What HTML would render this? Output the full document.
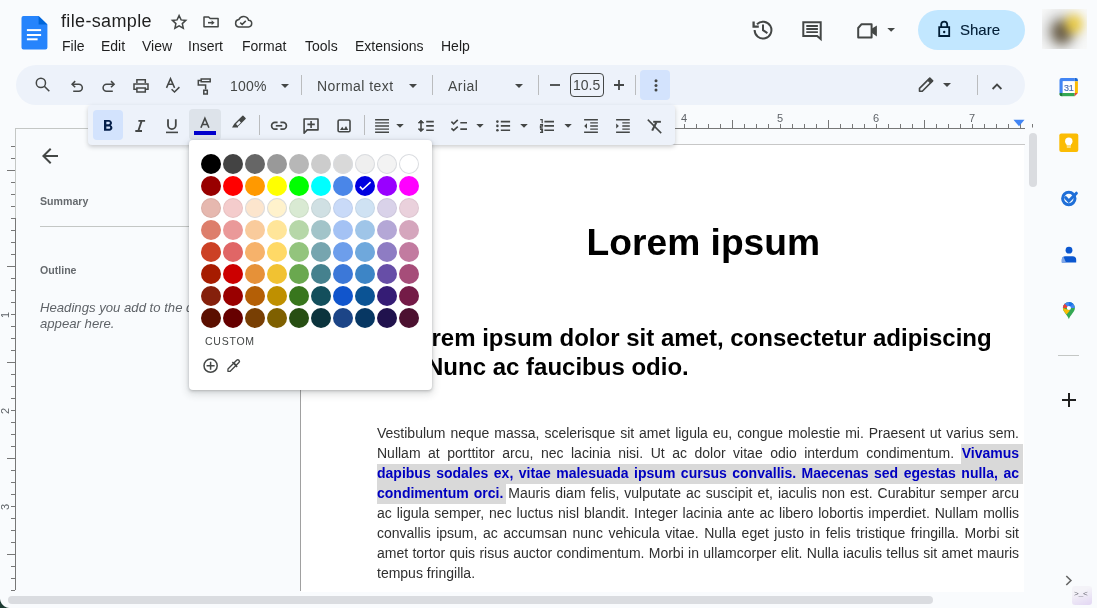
<!DOCTYPE html>
<html><head><meta charset="utf-8">
<style>
*{box-sizing:border-box;margin:0;padding:0}
html,body{width:1097px;height:608px;overflow:hidden;background:#f9fbfd;font-family:"Liberation Sans",sans-serif;color:#1f1f1f}
.a{position:absolute}
.ico{position:absolute;fill:none;stroke:#444746;stroke-width:2}
.menu{position:absolute;top:38.3px;font-size:14px;color:#1f1f1f;line-height:16px}
.tb{position:absolute;left:16px;top:65px;width:1009px;height:40px;border-radius:20px;background:#edf2fa}
.div{position:absolute;width:1px;height:20px;background:#babcbe}
.arr{position:absolute;width:0;height:0;border-left:4px solid transparent;border-right:4px solid transparent;border-top:4px solid #444746}
.tbt{position:absolute;font-size:14px;color:#444746;line-height:16px;letter-spacing:.45px}
.rn{position:absolute;font-size:11px;line-height:12px;color:#5f6368;width:8px;text-align:center}
.body{font-size:14px;line-height:20px;color:#303030}
.ln{text-align:justify;text-align-last:justify;white-space:nowrap;height:20px}
.ln b{color:#0000c0}
.last{text-align-last:left}
.sw{position:absolute;width:20px;height:20px;border-radius:50%}
</style></head><body><div id="root" style="position:absolute;left:0;top:0;width:1097px;height:608px;will-change:transform">

<!-- header -->
<svg class="a" style="left:21px;top:15px" width="27" height="36" viewBox="0 0 27 36">
  <path d="M2.5 1H17.6L26.4 9.6V32.6A2 2 0 0 1 24.4 34.6H2.5A2 2 0 0 1 0.5 32.6V3A2 2 0 0 1 2.5 1Z" fill="#2684fc"/>
  <path d="M17.6 1L26.4 9.6H17.6Z" fill="#0066da"/>
  <rect x="5.9" y="14.1" width="14.2" height="2" fill="#fff"/><rect x="5.9" y="19" width="14.2" height="2" fill="#fff"/><rect x="5.9" y="23.3" width="10.7" height="2" fill="#fff"/>
</svg>
<div class="a" style="left:61px;top:10px;font-size:18px;line-height:22px;color:#1f1f1f;letter-spacing:.35px">file-sample</div>

<div class="menu" style="left:62px">File</div>
<div class="menu" style="left:101px">Edit</div>
<div class="menu" style="left:142px">View</div>
<div class="menu" style="left:188px">Insert</div>
<div class="menu" style="left:242px">Format</div>
<div class="menu" style="left:305px">Tools</div>
<div class="menu" style="left:355px">Extensions</div>
<div class="menu" style="left:441px">Help</div>

<!-- share -->
<div class="a" style="left:918px;top:10px;width:107px;height:40px;border-radius:20px;background:#c2e7ff"></div>
<div class="a" style="left:960px;top:22px;font-size:15px;line-height:16px;color:#001d35;-webkit-text-stroke:.12px #001d35">Share</div>
<div class="a" style="left:1042px;top:9px;width:45px;height:40px;overflow:hidden;background:#f8f9f9">
<div class="a" style="left:-8px;top:-8px;width:61px;height:56px;filter:blur(5px);background:radial-gradient(ellipse 12px 13px at 40px 23px,#f0d548 0%,#e6c640 45%,rgba(240,220,120,0) 100%),radial-gradient(ellipse 14px 16px at 28px 31px,#5d5244 0%,#6e624c 45%,rgba(150,145,140,0) 100%),radial-gradient(ellipse 24px 26px at 27px 30px,rgba(150,150,150,.75) 0%,rgba(246,247,247,0) 100%)"></div>
</div>

<!-- toolbar -->
<div class="tb"></div>
<div class="tbt" style="left:230px;top:78px;letter-spacing:.2px">100%</div>
<div class="arr" style="left:281px;top:84px"></div>
<div class="div" style="left:301px;top:75px"></div>
<div class="tbt" style="left:317px;top:78px">Normal text</div>
<div class="arr" style="left:409px;top:84px"></div>
<div class="div" style="left:432px;top:75px"></div>
<div class="tbt" style="left:448px;top:78px">Arial</div>
<div class="arr" style="left:515px;top:84px"></div>
<div class="div" style="left:538px;top:75px"></div>
<div class="a" style="left:570px;top:73px;width:34px;height:24px;border:1px solid #444746;border-radius:4px"></div>
<div class="tbt" style="left:573px;top:77px;letter-spacing:0">10.5</div>
<div class="div" style="left:635px;top:75px"></div>
<div class="a" style="left:640px;top:70px;width:30px;height:30px;border-radius:4px;background:#d3e3fd"></div>
<div class="arr" style="left:943px;top:83px"></div>
<div class="div" style="left:977px;top:75px"></div>



<svg class="a" style="left:0;top:0" width="1097" height="608" viewBox="0 0 1097 608" fill="none" stroke="#444746" stroke-width="1.6">
<!-- star -->
<path d="M179.1 15.6L181.1 19.9L185.8 20.4L182.3 23.6L183.3 28.2L179.1 25.9L174.9 28.2L175.9 23.6L172.4 20.4L177.1 19.9Z" stroke-width="1.5" stroke-linejoin="miter"/>
<!-- folder move -->
<path d="M204 16.9H208.6L210.2 18.6H218.1V26.8H204Z" stroke-width="1.5" stroke-linejoin="round"/>
<path d="M208 22.7H212.5" stroke-width="1.6"/><path d="M211.6 20.3L214.6 22.7L211.6 25.1Z" fill="#444746" stroke="none"/>
<!-- cloud done -->
<path d="M238.6 26.9H248.2A3.3 3.3 0 0 0 248.6 20.3A5.2 5.2 0 0 0 238.8 19.6A3.7 3.7 0 0 0 238.6 26.9Z" stroke-width="1.5"/>
<path d="M240.2 22.6L242.2 24.4L245.8 20.9" stroke-width="1.5"/>
<!-- history -->
<path d="M754.6 30A8.4 8.4 0 1 0 757 24.2" stroke-width="2"/>
<path d="M753.6 21.4V26.6H758.8" stroke-width="2.3"/>
<path d="M763 24.6V30.2L767.4 33.2" stroke-width="2"/>
<!-- comment -->
<path d="M803.3 22.2H820.7V39L817.2 35.9H803.3Z" stroke-width="2" stroke-linejoin="miter"/>
<path d="M806.3 26H817.9M806.3 29H817.9M806.3 32.1H817.9" stroke-width="1.8"/>
<!-- video -->
<path d="M861.6 24.2H871.6V37.6H858.2V28Z" stroke-width="2" stroke-linejoin="round"/>
<path d="M872 28.6L876.9 25.4V36.4L872 33Z" fill="#444746" stroke="none"/>
<path d="M887.3 28H895L891.15 31.8Z" fill="#444746" stroke="none"/>
<!-- lock -->
<path d="M939.2 27.2H949.2V36H939.2Z" stroke="#001d35" stroke-width="1.8"/>
<path d="M941.2 27V24.6A3 3 0 0 1 947.2 24.6V27" stroke="#001d35" stroke-width="1.8"/>
<circle cx="944.2" cy="32" r="1.2" fill="#001d35" stroke="none"/>
<!-- search -->
<circle cx="40.9" cy="82.9" r="4.6" stroke-width="1.5"/>
<path d="M44.3 86.3L49.3 91.3" stroke-width="1.6"/>
<!-- undo -->
<path d="M73.2 91.2H78.8A3.5 3.5 0 0 0 78.8 84.2H72.2" stroke-width="1.55"/>
<path d="M75.2 81.1L72.1 84.2L75.2 87.3" stroke-width="1.55"/>
<!-- redo -->
<path d="M112.8 91.2H106.6A3.5 3.5 0 0 1 106.6 84.2H114" stroke-width="1.55"/>
<path d="M111 81.1L114.1 84.2L111 87.3" stroke-width="1.55"/>
<!-- print -->
<path d="M136.9 83V79.8H145.3V83" stroke-width="1.5"/>
<path d="M136.9 89.3H134V83.9H148V89.3H145.3" stroke-width="1.5"/>
<path d="M136.9 87.9H145.3V92H136.9Z" stroke-width="1.5"/>
<!-- spellcheck -->
<path d="M166.5 87.9L170.5 78.6L174.6 87.9M168 84.3H173" stroke-width="1.5"/>
<path d="M171.6 89.3L174.5 92L179.4 87.1" stroke-width="1.5"/>
<!-- paint format -->
<path d="M201.2 79H210.2V81.8H201.2Z" stroke-width="1.5"/>
<path d="M201 80.4H198.3V85H205.6V89.6" stroke-width="1.5"/>
<path d="M203.8 90.2H207.3V94H203.8Z" stroke-width="1.5"/>
<!-- minus plus -->
<path d="M550 85H560" stroke-width="1.8"/>
<path d="M614 85H624M619 80V90" stroke-width="1.8"/>
<!-- more -->
<circle cx="656" cy="80.8" r="1.5" fill="#444746" stroke="none"/><circle cx="656" cy="85.4" r="1.5" fill="#444746" stroke="none"/><circle cx="656" cy="90" r="1.5" fill="#444746" stroke="none"/>
<!-- pencil -->
<path d="M919.5 91.2V88.4L929.8 78.1L932.6 80.9L922.3 91.2Z" stroke-width="1.6" stroke-linejoin="round"/><path d="M927.6 80.3L929.8 78.1L932.6 80.9L930.4 83.1Z" fill="#444746" stroke="#444746" stroke-width="1"/>
<!-- caret up -->
<path d="M992.6 89L997 84.6L1001.4 89" stroke-width="1.8"/>
</svg>

<!-- rulers -->
<div class="a" style="left:15px;top:128px;width:1010px;height:1px;background:#c4c7c5"></div>
<div class="a" style="left:300px;top:128px;width:725px;height:1px;background:#777"></div>
<div class="a" style="left:15px;top:128px;width:1px;height:90px;background:#c4c7c5"></div>
<div class="a" style="left:15px;top:218px;width:1px;height:372px;background:#777"></div>
<div class="a" style="left:684px;top:124px;width:1px;height:4px;background:#777"></div>
<div class="a" style="left:696px;top:124px;width:1px;height:4px;background:#777"></div>
<div class="a" style="left:708px;top:124px;width:1px;height:4px;background:#777"></div>
<div class="a" style="left:720px;top:124px;width:1px;height:4px;background:#777"></div>
<div class="a" style="left:732px;top:120px;width:1px;height:8px;background:#777"></div>
<div class="a" style="left:744px;top:124px;width:1px;height:4px;background:#777"></div>
<div class="a" style="left:756px;top:124px;width:1px;height:4px;background:#777"></div>
<div class="a" style="left:768px;top:124px;width:1px;height:4px;background:#777"></div>
<div class="a" style="left:780px;top:124px;width:1px;height:4px;background:#777"></div>
<div class="a" style="left:792px;top:124px;width:1px;height:4px;background:#777"></div>
<div class="a" style="left:804px;top:124px;width:1px;height:4px;background:#777"></div>
<div class="a" style="left:816px;top:124px;width:1px;height:4px;background:#777"></div>
<div class="a" style="left:828px;top:120px;width:1px;height:8px;background:#777"></div>
<div class="a" style="left:840px;top:124px;width:1px;height:4px;background:#777"></div>
<div class="a" style="left:852px;top:124px;width:1px;height:4px;background:#777"></div>
<div class="a" style="left:864px;top:124px;width:1px;height:4px;background:#777"></div>
<div class="a" style="left:876px;top:124px;width:1px;height:4px;background:#777"></div>
<div class="a" style="left:888px;top:124px;width:1px;height:4px;background:#777"></div>
<div class="a" style="left:900px;top:124px;width:1px;height:4px;background:#777"></div>
<div class="a" style="left:912px;top:124px;width:1px;height:4px;background:#777"></div>
<div class="a" style="left:924px;top:120px;width:1px;height:8px;background:#777"></div>
<div class="a" style="left:936px;top:124px;width:1px;height:4px;background:#777"></div>
<div class="a" style="left:948px;top:124px;width:1px;height:4px;background:#777"></div>
<div class="a" style="left:960px;top:124px;width:1px;height:4px;background:#777"></div>
<div class="a" style="left:972px;top:124px;width:1px;height:4px;background:#777"></div>
<div class="a" style="left:984px;top:124px;width:1px;height:4px;background:#777"></div>
<div class="a" style="left:996px;top:124px;width:1px;height:4px;background:#777"></div>
<div class="a" style="left:1008px;top:124px;width:1px;height:4px;background:#777"></div>
<div class="a" style="left:1020px;top:120px;width:1px;height:8px;background:#777"></div>
<div class="rn" style="left:680px;top:112px">4</div>
<div class="rn" style="left:776px;top:112px">5</div>
<div class="rn" style="left:872px;top:112px">6</div>
<div class="rn" style="left:968px;top:112px">7</div>
<div class="a" style="left:11px;top:146px;width:4px;height:1px;background:#777"></div>
<div class="a" style="left:11px;top:158px;width:4px;height:1px;background:#777"></div>
<div class="a" style="left:7px;top:170px;width:8px;height:1px;background:#777"></div>
<div class="a" style="left:11px;top:182px;width:4px;height:1px;background:#777"></div>
<div class="a" style="left:11px;top:194px;width:4px;height:1px;background:#777"></div>
<div class="a" style="left:11px;top:206px;width:4px;height:1px;background:#777"></div>
<div class="a" style="left:11px;top:218px;width:4px;height:1px;background:#777"></div>
<div class="a" style="left:11px;top:230px;width:4px;height:1px;background:#777"></div>
<div class="a" style="left:11px;top:242px;width:4px;height:1px;background:#777"></div>
<div class="a" style="left:11px;top:254px;width:4px;height:1px;background:#777"></div>
<div class="a" style="left:7px;top:266px;width:8px;height:1px;background:#777"></div>
<div class="a" style="left:11px;top:278px;width:4px;height:1px;background:#777"></div>
<div class="a" style="left:11px;top:290px;width:4px;height:1px;background:#777"></div>
<div class="a" style="left:11px;top:302px;width:4px;height:1px;background:#777"></div>
<div class="a" style="left:11px;top:326px;width:4px;height:1px;background:#777"></div>
<div class="a" style="left:11px;top:338px;width:4px;height:1px;background:#777"></div>
<div class="a" style="left:11px;top:350px;width:4px;height:1px;background:#777"></div>
<div class="a" style="left:7px;top:362px;width:8px;height:1px;background:#777"></div>
<div class="a" style="left:11px;top:374px;width:4px;height:1px;background:#777"></div>
<div class="a" style="left:11px;top:386px;width:4px;height:1px;background:#777"></div>
<div class="a" style="left:11px;top:398px;width:4px;height:1px;background:#777"></div>
<div class="a" style="left:11px;top:422px;width:4px;height:1px;background:#777"></div>
<div class="a" style="left:11px;top:434px;width:4px;height:1px;background:#777"></div>
<div class="a" style="left:11px;top:446px;width:4px;height:1px;background:#777"></div>
<div class="a" style="left:7px;top:458px;width:8px;height:1px;background:#777"></div>
<div class="a" style="left:11px;top:470px;width:4px;height:1px;background:#777"></div>
<div class="a" style="left:11px;top:482px;width:4px;height:1px;background:#777"></div>
<div class="a" style="left:11px;top:494px;width:4px;height:1px;background:#777"></div>
<div class="a" style="left:11px;top:518px;width:4px;height:1px;background:#777"></div>
<div class="a" style="left:11px;top:530px;width:4px;height:1px;background:#777"></div>
<div class="a" style="left:11px;top:542px;width:4px;height:1px;background:#777"></div>
<div class="a" style="left:7px;top:554px;width:8px;height:1px;background:#777"></div>
<div class="a" style="left:11px;top:566px;width:4px;height:1px;background:#777"></div>
<div class="a" style="left:11px;top:578px;width:4px;height:1px;background:#777"></div>
<div class="a" style="left:11px;top:590px;width:4px;height:1px;background:#777"></div>
<div class="rn" style="left:1px;top:309px;transform:rotate(-90deg)">1</div>
<div class="rn" style="left:1px;top:405px;transform:rotate(-90deg)">2</div>
<div class="rn" style="left:1px;top:501px;transform:rotate(-90deg)">3</div>
<div class="a" style="left:11px;top:314px;width:4px;height:1px;background:#777"></div>
<div class="a" style="left:11px;top:410px;width:4px;height:1px;background:#777"></div>
<div class="a" style="left:11px;top:506px;width:4px;height:1px;background:#777"></div>
<!-- page -->
<div class="a" style="left:301px;top:144px;width:723px;height:448px;background:#fff"></div>
<div class="a" style="left:301px;top:144px;width:724px;height:1px;background:#c7c7c7"></div>
<div class="a" style="left:300px;top:390px;width:1px;height:201px;background:#a0a0a0"></div>

<div class="a" style="left:586.6px;top:221px;font-size:37.2px;font-weight:bold;line-height:42px;color:#000;white-space:nowrap">Lorem ipsum</div>
<div class="a" style="left:402.2px;top:324px;font-size:24px;font-weight:bold;line-height:28px;color:#000;white-space:nowrap">Lorem ipsum dolor sit amet, consectetur adipiscing</div>
<div class="a" style="left:378px;top:353px;font-size:24px;font-weight:bold;line-height:28px;color:#000;white-space:nowrap">elit. Nunc ac faucibus odio.</div>

<div class="a" style="top:444px;height:20px;background:#d9d9d9;left:961px;width:62px"></div>
<div class="a" style="left:377px;top:464px;width:646px;height:20px;background:#d9d9d9"></div>
<div class="a" style="left:377px;top:484px;width:129px;height:20px;background:#d9d9d9"></div>
<div class="body a" style="left:377px;top:423px;width:642px">
<div class="ln">Vestibulum neque massa, scelerisque sit amet ligula eu, congue molestie mi. Praesent ut varius sem.</div>
<div class="ln">Nullam at porttitor arcu, nec lacinia nisi. Ut ac dolor vitae odio interdum condimentum. <b>Vivamus</b></div>
<div class="ln"><b>dapibus sodales ex, vitae malesuada ipsum cursus convallis. Maecenas sed egestas nulla, ac</b></div>
<div class="ln"><b>condimentum orci.</b> Mauris diam felis, vulputate ac suscipit et, iaculis non est. Curabitur semper arcu</div>
<div class="ln">ac ligula semper, nec luctus nisl blandit. Integer lacinia ante ac libero lobortis imperdiet. Nullam mollis</div>
<div class="ln">convallis ipsum, ac accumsan nunc vehicula vitae. Nulla eget justo in felis tristique fringilla. Morbi sit</div>
<div class="ln">amet tortor quis risus auctor condimentum. Morbi in ullamcorper elit. Nulla iaculis tellus sit amet mauris</div>
<div class="ln last">tempus fringilla.</div>
</div>

<!-- left panel -->
<svg class="a" style="left:42px;top:148px" width="16" height="16" viewBox="0 0 16 16"><path d="M16 7H3.83l5.59-5.59L8 0 0 8l8 8 1.41-1.41L3.83 9H16z" fill="#444746"/></svg>
<div class="a" style="left:40px;top:195px;font-size:10.6px;line-height:13px;font-weight:bold;color:#666a6e;letter-spacing:0">Summary</div>
<div class="a" style="left:40px;top:226px;width:260px;height:1px;background:#c4c7c5"></div>
<div class="a" style="left:40px;top:264px;font-size:10.6px;line-height:13px;font-weight:bold;color:#666a6e">Outline</div>
<div class="a" style="left:40px;top:299.5px;font-size:13.15px;line-height:16.3px;font-style:italic;color:#5f6368;white-space:nowrap">Headings you add to the document will<br>appear here.</div>

<!-- floating toolbar -->
<div class="a" style="left:88px;top:105px;width:587px;height:40px;background:#edf2fa;border-radius:4px;box-shadow:0 2px 4px rgba(60,64,67,.25)"></div>
<div class="a" style="left:93px;top:110px;width:30px;height:30px;border-radius:4px;background:#d3e3fd"></div>
<div class="a" style="left:189px;top:109px;width:32px;height:31px;border-radius:4px;background:#dde3ea"></div>
<div class="a" style="left:194px;top:131px;width:22px;height:4px;background:#0000cc"></div>
<div class="div" style="left:259px;top:115px"></div>
<div class="div" style="left:364px;top:115px"></div>
<svg class="a" style="left:0;top:0" width="1097" height="608" viewBox="0 0 1097 608" fill="none" stroke="#444746" stroke-width="1.6">
<!-- bold -->
<path transform="translate(104,119.9) scale(0.78) translate(-7,-4)" d="M15.6 10.79c.97-.67 1.65-1.77 1.65-2.79 0-2.26-1.75-4-4-4H7v14h7.04c2.09 0 3.71-1.7 3.71-3.79 0-1.52-.86-2.82-2.15-3.42zM10 6.5h3c.83 0 1.5.67 1.5 1.5s-.67 1.5-1.5 1.5h-3v-3zm3.5 9H10v-3h3.5c.83 0 1.5.67 1.5 1.5s-.67 1.5-1.5 1.5z" fill="#041e49" stroke="none"/>
<!-- italic -->
<path d="M138.4 120.9H145.1M135.3 131H142M141.6 121L138.3 131" stroke-width="1.9"/>
<!-- underline -->
<path d="M168 119.3V125.2A3.9 3.9 0 0 0 175.8 125.2V119.3" stroke-width="1.8"/>
<path d="M166 132.4H178" stroke-width="1.6"/>
<!-- A -->
<path d="M200.9 127.7L204.9 118.2L208.9 127.7M202.3 124.5H207.5" stroke-width="1.6"/>
<!-- highlighter -->
<path d="M234.3 123.8L242.4 115.7Q242.9 115.2 243.4 115.7L245.6 117.9Q246.1 118.4 245.6 118.9L238 126.5L238 127.4H232Z" fill="#444746" stroke="none"/>
<path d="M236 124.05L237.7 125.74L240.9 122.56L239.2 120.86Z" fill="#edf2fa" stroke="none"/>
<!-- link -->
<path d="M277.6 122.4H275A3.4 3.4 0 0 0 275 129.2H277.6M280.4 122.4H283A3.4 3.4 0 0 1 283 129.2H280.4" stroke-width="1.7"/>
<path d="M275.8 125.8H282.2" stroke-width="1.7"/>
<!-- add comment -->
<path d="M304.1 133.2V119H318V129.9H307.2Z" stroke-width="1.6" stroke-linejoin="round"/>
<path d="M307.4 124.4H314.8M311.1 120.9V127.9" stroke-width="1.6"/>
<!-- image -->
<rect x="338.1" y="120" width="11.9" height="11.8" rx="1.3" stroke-width="1.6"/>
<path d="M340 129.9L342.2 126.8L344 129.2L346 126L348.2 129.9Z" fill="#444746" stroke="none"/>
<!-- justify -->
<path d="M375.1 119.7H389M375.1 122.9H389M375.1 126H389M375.1 129.1H389M375.1 132.3H389" stroke-width="1.4"/>
<!-- line spacing -->
<path d="M421 121.5V130.3" stroke-width="1.6"/>
<path d="M418.2 122.9L421 120.1L423.8 122.9Z M418.2 128.9L421 131.7L423.8 128.9Z" fill="#444746" stroke="#444746" stroke-width="0.8"/>
<path d="M426.2 121.6H433.8M426.2 125.9H433.8M426.2 130.2H433.8" stroke-width="1.6"/>
<!-- checklist -->
<path d="M451.4 121.7L453.6 123.8L457.8 119.9M451.4 128.3L453.6 130.4L457.8 126.6" stroke-width="1.6"/>
<path d="M460.3 122.7H467M460.3 129.1H467" stroke-width="1.6"/>
<!-- bullets -->
<circle cx="497.4" cy="121.6" r="1.3" fill="#444746" stroke="none"/><circle cx="497.4" cy="125.9" r="1.3" fill="#444746" stroke="none"/><circle cx="497.4" cy="130.3" r="1.3" fill="#444746" stroke="none"/>
<path d="M500.8 121.6H510.1M500.8 125.9H510.1M500.8 130.3H510.1" stroke-width="1.6"/>
<!-- numbered -->
<path d="M540.2 119.7H542.2V123.3M540 124.6H542.5V126.2H540.4V127.9H542.7M540 129.3H542.5V132.3H540M541 130.8H542.5" stroke-width="1.2"/>
<path d="M544.4 121.6H554M544.4 125.9H554M544.4 130.2H554" stroke-width="1.6"/>
<!-- decrease indent -->
<path d="M584.1 119.7H597.9M584.1 132.3H597.9M590.2 122.9H597.9M590.2 126H597.9M590.2 129.1H597.9" stroke-width="1.4"/>
<path d="M587 123.3V128.7L584.2 126Z" fill="#444746" stroke="none"/>
<!-- increase indent -->
<path d="M616.1 119.7H629.8M616.1 132.2H629.8M622.3 122.9H629.8M622.3 126H629.8M622.3 129.1H629.8" stroke-width="1.4"/>
<path d="M616.2 123.4V128.6L618.9 126Z" fill="#444746" stroke="none"/>
<!-- clear formatting -->
<path d="M647.8 119.6L661.2 133.1" stroke-width="1.5"/>
<path d="M653.2 121.8H660.9" stroke-width="1.9"/>
<path d="M656.4 122.2L652.2 130.6" stroke-width="2.1"/>
<!-- dropdown arrows -->
<path d="M396.2 124.1H403.8L400 127.8Z M476.3 124.1H483.7L480 127.8Z M520.2 124.1H527.8L524 127.8Z M564.4 124.1H571.8L568.1 127.8Z" fill="#444746" stroke="none"/>
</svg>

<!-- palette -->
<div class="a" style="left:189px;top:140px;width:243px;height:250px;background:#fff;border-radius:4px;box-shadow:0 1px 3px rgba(60,64,67,.3),0 3px 7px 2px rgba(60,64,67,.15)"></div>
<div class="sw" style="left:201px;top:154px;background:#000000;"></div>
<div class="sw" style="left:223px;top:154px;background:#434343;"></div>
<div class="sw" style="left:245px;top:154px;background:#666666;"></div>
<div class="sw" style="left:267px;top:154px;background:#999999;"></div>
<div class="sw" style="left:289px;top:154px;background:#b7b7b7;"></div>
<div class="sw" style="left:311px;top:154px;background:#cccccc;"></div>
<div class="sw" style="left:333px;top:154px;background:#d9d9d9;box-shadow:inset 0 0 0 1px #dadce0;"></div>
<div class="sw" style="left:355px;top:154px;background:#efefef;box-shadow:inset 0 0 0 1px #dadce0;"></div>
<div class="sw" style="left:377px;top:154px;background:#f3f3f3;box-shadow:inset 0 0 0 1px #dadce0;"></div>
<div class="sw" style="left:399px;top:154px;background:#ffffff;box-shadow:inset 0 0 0 1px #dadce0;"></div>
<div class="sw" style="left:201px;top:176px;background:#980000;"></div>
<div class="sw" style="left:223px;top:176px;background:#ff0000;"></div>
<div class="sw" style="left:245px;top:176px;background:#ff9900;"></div>
<div class="sw" style="left:267px;top:176px;background:#ffff00;"></div>
<div class="sw" style="left:289px;top:176px;background:#00ff00;"></div>
<div class="sw" style="left:311px;top:176px;background:#00ffff;"></div>
<div class="sw" style="left:333px;top:176px;background:#4a86e8;"></div>
<div class="sw" style="left:355px;top:176px;background:#0000e0;"></div>
<div class="sw" style="left:377px;top:176px;background:#9900ff;"></div>
<div class="sw" style="left:399px;top:176px;background:#ff00ff;"></div>
<div class="sw" style="left:201px;top:198px;background:#e6b8af;box-shadow:inset 0 0 0 1px rgba(0,0,0,.05);"></div>
<div class="sw" style="left:223px;top:198px;background:#f4cccc;box-shadow:inset 0 0 0 1px rgba(0,0,0,.05);"></div>
<div class="sw" style="left:245px;top:198px;background:#fce5cd;box-shadow:inset 0 0 0 1px #dadce0;"></div>
<div class="sw" style="left:267px;top:198px;background:#fff2cc;box-shadow:inset 0 0 0 1px #dadce0;"></div>
<div class="sw" style="left:289px;top:198px;background:#d9ead3;box-shadow:inset 0 0 0 1px rgba(0,0,0,.05);"></div>
<div class="sw" style="left:311px;top:198px;background:#d0e0e3;box-shadow:inset 0 0 0 1px rgba(0,0,0,.05);"></div>
<div class="sw" style="left:333px;top:198px;background:#c9daf8;box-shadow:inset 0 0 0 1px rgba(0,0,0,.05);"></div>
<div class="sw" style="left:355px;top:198px;background:#cfe2f3;box-shadow:inset 0 0 0 1px rgba(0,0,0,.05);"></div>
<div class="sw" style="left:377px;top:198px;background:#d9d2e9;box-shadow:inset 0 0 0 1px rgba(0,0,0,.05);"></div>
<div class="sw" style="left:399px;top:198px;background:#ead1dc;box-shadow:inset 0 0 0 1px rgba(0,0,0,.05);"></div>
<div class="sw" style="left:201px;top:220px;background:#dd7e6b;"></div>
<div class="sw" style="left:223px;top:220px;background:#ea9999;"></div>
<div class="sw" style="left:245px;top:220px;background:#f9cb9c;"></div>
<div class="sw" style="left:267px;top:220px;background:#ffe599;"></div>
<div class="sw" style="left:289px;top:220px;background:#b6d7a8;"></div>
<div class="sw" style="left:311px;top:220px;background:#a2c4c9;"></div>
<div class="sw" style="left:333px;top:220px;background:#a4c2f4;"></div>
<div class="sw" style="left:355px;top:220px;background:#9fc5e8;"></div>
<div class="sw" style="left:377px;top:220px;background:#b4a7d6;"></div>
<div class="sw" style="left:399px;top:220px;background:#d5a6bd;"></div>
<div class="sw" style="left:201px;top:242px;background:#cc4125;"></div>
<div class="sw" style="left:223px;top:242px;background:#e06666;"></div>
<div class="sw" style="left:245px;top:242px;background:#f6b26b;"></div>
<div class="sw" style="left:267px;top:242px;background:#ffd966;"></div>
<div class="sw" style="left:289px;top:242px;background:#93c47d;"></div>
<div class="sw" style="left:311px;top:242px;background:#76a5af;"></div>
<div class="sw" style="left:333px;top:242px;background:#6d9eeb;"></div>
<div class="sw" style="left:355px;top:242px;background:#6fa8dc;"></div>
<div class="sw" style="left:377px;top:242px;background:#8e7cc3;"></div>
<div class="sw" style="left:399px;top:242px;background:#c27ba0;"></div>
<div class="sw" style="left:201px;top:264px;background:#a61c00;"></div>
<div class="sw" style="left:223px;top:264px;background:#cc0000;"></div>
<div class="sw" style="left:245px;top:264px;background:#e69138;"></div>
<div class="sw" style="left:267px;top:264px;background:#f1c232;"></div>
<div class="sw" style="left:289px;top:264px;background:#6aa84f;"></div>
<div class="sw" style="left:311px;top:264px;background:#45818e;"></div>
<div class="sw" style="left:333px;top:264px;background:#3c78d8;"></div>
<div class="sw" style="left:355px;top:264px;background:#3d85c6;"></div>
<div class="sw" style="left:377px;top:264px;background:#674ea7;"></div>
<div class="sw" style="left:399px;top:264px;background:#a64d79;"></div>
<div class="sw" style="left:201px;top:286px;background:#85200c;"></div>
<div class="sw" style="left:223px;top:286px;background:#990000;"></div>
<div class="sw" style="left:245px;top:286px;background:#b45f06;"></div>
<div class="sw" style="left:267px;top:286px;background:#bf9000;"></div>
<div class="sw" style="left:289px;top:286px;background:#38761d;"></div>
<div class="sw" style="left:311px;top:286px;background:#134f5c;"></div>
<div class="sw" style="left:333px;top:286px;background:#1155cc;"></div>
<div class="sw" style="left:355px;top:286px;background:#0b5394;"></div>
<div class="sw" style="left:377px;top:286px;background:#351c75;"></div>
<div class="sw" style="left:399px;top:286px;background:#741b47;"></div>
<div class="sw" style="left:201px;top:308px;background:#5b0f00;"></div>
<div class="sw" style="left:223px;top:308px;background:#660000;"></div>
<div class="sw" style="left:245px;top:308px;background:#783f04;"></div>
<div class="sw" style="left:267px;top:308px;background:#7f6000;"></div>
<div class="sw" style="left:289px;top:308px;background:#274e13;"></div>
<div class="sw" style="left:311px;top:308px;background:#0c343d;"></div>
<div class="sw" style="left:333px;top:308px;background:#1c4587;"></div>
<div class="sw" style="left:355px;top:308px;background:#073763;"></div>
<div class="sw" style="left:377px;top:308px;background:#20124d;"></div>
<div class="sw" style="left:399px;top:308px;background:#4c1130;"></div>
<svg class="a" style="left:0;top:0" width="1097" height="608" viewBox="0 0 1097 608" fill="none" stroke="#444746" stroke-width="1.5">
<path d="M359.9 186.6L362.6 189.5L370.6 182.2" stroke="#fff" stroke-width="1.6"/>
<circle cx="210.6" cy="365.7" r="6.6" stroke-width="1.5"/>
<path d="M206.6 365.7H214.6M210.6 361.7V369.7" stroke-width="1.5"/>
<g transform="translate(233.2,366) rotate(-45)">
<path d="M-7.5 0L-5.8 -1.6H2.6V1.6H-5.8Z" stroke-width="1.3" stroke-linejoin="round"/>
<path d="M2.2 -3.4V3.4" stroke-width="1.5"/>
<path d="M2.2 -1.6H6.5A1.6 1.6 0 0 1 6.5 1.6H2.2" stroke-width="1.4"/>
</g>
</svg>
<div class="a" style="left:205px;top:335px;font-size:10.5px;line-height:12px;color:#444746;letter-spacing:.75px">CUSTOM</div>

<svg class="a" style="left:0;top:0" width="1097" height="608" viewBox="0 0 1097 608">
<!-- ruler right indent -->
<path d="M1013.5 119.8H1024.5L1019 126.3Z" fill="#4285f4"/>
<path d="M1032.5 124V127.5" stroke="#777" stroke-width="1"/>
<!-- calendar -->
<g transform="translate(1059.5,78)">
<path d="M0 2A2 2 0 0 1 2 0H15.2V3.3H3.3V15H0Z" fill="#4285f4"/>
<path d="M15.2 0H16.4A2 2 0 0 1 18.4 2V3.3H15.2Z" fill="#1967d2"/>
<path d="M15.2 3.3H18.4V15H15.2Z" fill="#fbbc04"/>
<path d="M3.3 15H15.2V18.2H3.3Z" fill="#34a853"/>
<path d="M0 15H3.3V18.2H2A2 2 0 0 1 0 16.2Z" fill="#188038"/>
<path d="M15.2 15H18.4L15.2 18.2Z" fill="#ea4335"/>
<rect x="3.3" y="3.3" width="11.9" height="11.7" fill="#fff"/>
<text x="9.3" y="12.9" font-family="Liberation Sans" font-size="9" fill="#4a6fb5" text-anchor="middle" stroke="#4a6fb5" stroke-width=".2" letter-spacing="-.3">31</text>
</g>
<!-- keep -->
<rect x="1059.3" y="133.6" width="19" height="18.5" rx="2" fill="#fbbc04"/>
<circle cx="1068.8" cy="141.3" r="3.7" fill="#fff"/>
<path d="M1066.6 143.2H1071V145.5H1066.6Z" fill="#fff"/>
<path d="M1066.8 147H1070.8" stroke="#fff" stroke-width="1"/>
<!-- tasks -->
<circle cx="1068.8" cy="198.5" r="6.2" fill="none" stroke="#1f6fd8" stroke-width="3"/>
<path d="M1073 189.5L1079.5 196L1080.5 190Z" fill="#f9fbfd"/>
<path d="M1065.6 197.6L1068.8 201L1076.4 193.2" fill="none" stroke="#1f6fd8" stroke-width="3" stroke-linecap="round"/>
<!-- contacts -->
<circle cx="1069" cy="250.2" r="3.4" fill="#0b57d0"/>
<path d="M1061.8 262.5V259.8A3.6 3.6 0 0 1 1065.4 256.2H1072.6A3.6 3.6 0 0 1 1076.2 259.8V262.5Z" fill="#0b57d0"/>
<path d="M1061.8 262.5V259.8A3.6 3.6 0 0 1 1063.5 256.7L1066 262.5Z" fill="#7fa6e8"/>
<!-- maps -->
<path d="M1068.9 302A6 6 0 0 1 1074.9 308C1074.9 312 1070.6 314.5 1068.9 319.2C1067.2 314.5 1062.9 312 1062.9 308A6 6 0 0 1 1068.9 302Z" fill="#34a853"/>
<path d="M1068.9 302A6 6 0 0 1 1074.9 308L1062.9 308A6 6 0 0 1 1068.9 302Z" fill="#4285f4"/>
<path d="M1062.9 308A6 6 0 0 1 1064.7 303.8L1068.9 308Z" fill="#ea4335"/>
<path d="M1068.9 302A6 6 0 0 1 1073.2 303.8L1068.9 308Z" fill="#1a73e8"/>
<path d="M1062.9 308C1062.9 310.8 1065 312.6 1066.5 314.5L1070 310.5Z" fill="#fbbc04"/>
<circle cx="1068.9" cy="308" r="2.1" fill="#fff"/>
</svg>
<!-- corner badge -->
<div class="a" style="left:1072px;top:586px;width:20px;height:19px;border-radius:3px;background:linear-gradient(160deg,#f4f3f8 30%,#e2d6f3 100%)"></div>
<div class="a" style="left:1074px;top:589px;font-size:8px;line-height:10px;color:#6b6b75;letter-spacing:-.3px;font-family:'Liberation Mono',monospace">&gt;_&lt;</div>
<div class="a" style="left:0;top:598px;width:10px;height:10px;background:radial-gradient(circle at 10px 0,rgba(29,59,51,0) 9.5px,#1d3b33 10.5px)"></div>

<!-- side panel -->
<div class="a" style="left:1058px;top:355px;width:21px;height:1px;background:#c4c7c5"></div>
<svg class="a" style="left:1062px;top:393px" width="14" height="14" viewBox="0 0 14 14"><path d="M6 0h2v6h6v2H8v6H6V8H0V6h6z" fill="#1f1f1f"/></svg>
<svg class="a" style="left:1065px;top:575px" width="8" height="11" viewBox="0 0 8 11"><path d="M1.3 1l4.6 4.5L1.3 10" fill="none" stroke="#666" stroke-width="1.6"/></svg>

<!-- scrollbars -->
<div class="a" style="left:1029px;top:133px;width:8px;height:54px;border-radius:4px;background:#dadce0"></div>
<div class="a" style="left:8px;top:596px;width:925px;height:8px;border-radius:4px;background:#dadce0"></div>

</div></body></html>
